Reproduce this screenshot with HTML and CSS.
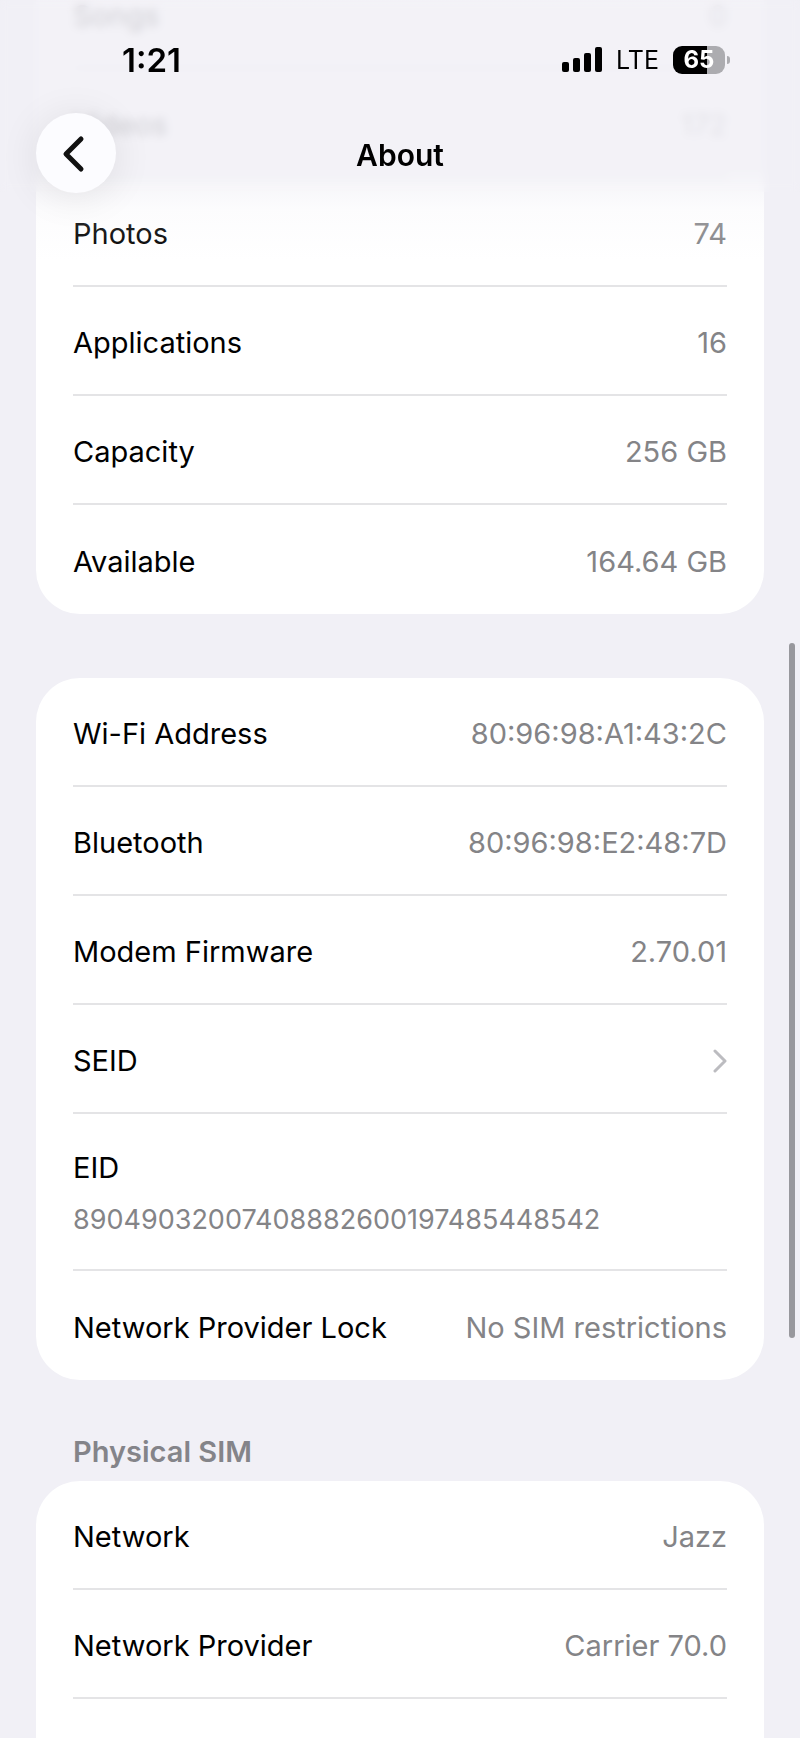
FILE: index.html
```html
<!DOCTYPE html>
<html lang="en">
<head>
    <meta charset="UTF-8">
    <meta name="viewport" content="width=device-width, initial-scale=1.0">
    <title>About</title>
    <link rel="stylesheet" href="styles.css">
</head>
<body>
    <div class="screen">
        <header class="header">
            <div class="status-bar">
                <span class="clock">1:21</span>
                <div class="status-icons">
                    <svg class="signal" viewBox="0 0 40 26" aria-hidden="true">
                        <rect x="0" y="15" width="7" height="10" rx="2"/>
                        <rect x="11" y="11" width="7" height="14" rx="2"/>
                        <rect x="22" y="6" width="7" height="19" rx="2"/>
                        <rect x="33" y="0" width="7" height="25" rx="2"/>
                    </svg>
                    <span class="carrier">LTE</span>
                    <div class="battery">65</div>
                </div>
            </div>
            <nav class="nav-bar">
                <button class="back-btn" type="button" aria-label="Back">
                    <svg viewBox="0 0 80 80" aria-hidden="true">
                        <path d="M45 26 L30 41 L45 56"/>
                    </svg>
                </button>
                <h1>About</h1>
            </nav>
        </header>

        <main class="content">
            <dl class="card">
                <div class="row"><dt>Songs</dt><dd>0</dd></div>
                <div class="row"><dt>Videos</dt><dd>172</dd></div>
                <div class="row"><dt>Photos</dt><dd>74</dd></div>
                <div class="row"><dt>Applications</dt><dd>16</dd></div>
                <div class="row"><dt>Capacity</dt><dd>256 GB</dd></div>
                <div class="row"><dt>Available</dt><dd>164.64 GB</dd></div>
            </dl>

            <dl class="card">
                <div class="row"><dt>Wi-Fi Address</dt><dd>80:96:98:A1:43:2C</dd></div>
                <div class="row"><dt>Bluetooth</dt><dd>80:96:98:E2:48:7D</dd></div>
                <div class="row"><dt>Modem Firmware</dt><dd>2.70.01</dd></div>
                <div class="row">
                    <dt>SEID</dt>
                    <dd>
                        <a class="disclosure" href="#seid" aria-label="Show SEID">
                            <svg viewBox="0 0 14 24" aria-hidden="true">
                                <path d="M2 2 L12 12 L2 22"/>
                            </svg>
                        </a>
                    </dd>
                </div>
                <div class="row row-stacked"><dt>EID</dt><dd>89049032007408882600197485448542</dd></div>
                <div class="row"><dt>Network Provider Lock</dt><dd>No SIM restrictions</dd></div>
            </dl>

            <h2>Physical SIM</h2>
            <dl class="card card-open">
                <div class="row"><dt>Network</dt><dd>Jazz</dd></div>
                <div class="row"><dt>Network Provider</dt><dd>Carrier 70.0</dd></div>
            </dl>
        </main>

        <div class="scrollbar"></div>
    </div>
</body>
</html>
```
FILE: styles.css
```css
* {
    box-sizing: border-box;
}
body {
    margin: 0;
    background: #f1f0f6;
    color: #000;
    font-family: Inter, "Liberation Sans", sans-serif;
    font-size: 29px;
    line-height: 32px;
}
.screen {
    position: relative;
    height: 100vh;
    overflow: hidden;
}

/* header floats over the scrolled list */
.header {
    position: absolute;
    top: 0;
    left: 0;
    right: 0;
    z-index: 1;
    padding-bottom: 68px;
    background: linear-gradient(rgba(241, 240, 246, 0.86) 0, rgba(241, 240, 246, 0.86) 170px, rgba(241, 240, 246, 0.6) 184px, rgba(241, 240, 246, 0.2) 210px, rgba(241, 240, 246, 0) 100%);
}
.header::before {
    content: "";
    position: absolute;
    top: 0;
    left: 0;
    right: 0;
    height: 192px;
    z-index: -1;
    backdrop-filter: blur(4px);
}
.status-bar {
    display: flex;
    justify-content: space-between;
    align-items: center;
    padding: 30px 71px 24px 122px;
    height: 113px;
}
.clock {
    font-size: 33px;
    font-weight: 600;
}
.status-icons {
    display: flex;
    align-items: center;
}
.signal {
    width: 40px;
    height: 26px;
}
.carrier {
    margin: 0 14px;
    font-size: 25px;
    font-weight: 400;
}
.battery {
    position: relative;
    width: 52px;
    height: 28px;
    margin-right: 4px;
    border-radius: 9px;
    background: linear-gradient(90deg, #000 65%, #acacb0 65%);
    color: #fff;
    font-size: 24px;
    font-weight: 700;
    line-height: 28px;
    text-align: center;
}
.battery::after {
    content: "";
    position: absolute;
    top: 10px;
    right: -5px;
    width: 3px;
    height: 8px;
    border-radius: 0 4px 4px 0;
    background: #acacb0;
}
.nav-bar {
    display: grid;
    grid-template-columns: 1fr auto 1fr;
    align-items: center;
    padding: 0 36px;
}
.back-btn {
    width: 80px;
    height: 80px;
    padding: 0;
    border: none;
    border-radius: 50%;
    background: #fcfcff;
    box-shadow: 0 4px 40px rgba(0, 0, 0, 0.09);
    cursor: pointer;
}
.back-btn svg {
    display: block;
    fill: none;
    stroke: #111;
    stroke-width: 5;
    stroke-linecap: round;
    stroke-linejoin: round;
}
h1 {
    margin: 0;
    padding-top: 4px;
    font-size: 30px;
    font-weight: 600;
}

/* list */
.content {
    display: flex;
    flex-direction: column;
    height: 100%;
    margin-top: -40px;
    padding: 0 36px;
}
.card {
    flex-shrink: 0;
    margin: 0 0 64px;
    padding: 0 37px;
    border-radius: 44px;
    background: #fff;
}
.row {
    display: flex;
    justify-content: space-between;
    align-items: center;
    height: 109px;
    padding-top: 4px;
    border-bottom: 2px solid #e4e4e6;
}
.row:last-child {
    border-bottom: none;
}
.row dd {
    margin: 0;
    color: #848487;
}
.row-stacked {
    flex-direction: column;
    justify-content: center;
    align-items: flex-start;
    gap: 20px;
    height: 157px;
}
.row-stacked dd {
    font-size: 27px;
}
.disclosure {
    display: block;
}
.disclosure svg {
    display: block;
    width: 14px;
    height: 24px;
    fill: none;
    stroke: #bcbcc0;
    stroke-width: 3;
    stroke-linecap: round;
    stroke-linejoin: round;
}
h2 {
    margin: -8px 37px 13px;
    color: #848489;
    font-size: 29px;
    font-weight: 600;
}
.card-open {
    flex: 1 0 auto;
    margin-bottom: -40px;
    border-radius: 44px 44px 0 0;
}
.card-open .row:last-child {
    border-bottom: 2px solid #e4e4e6;
}
.scrollbar {
    position: absolute;
    top: 37%;
    right: 5px;
    width: 6px;
    height: 40%;
    border-radius: 3px;
    background: #98989d;
}
```
